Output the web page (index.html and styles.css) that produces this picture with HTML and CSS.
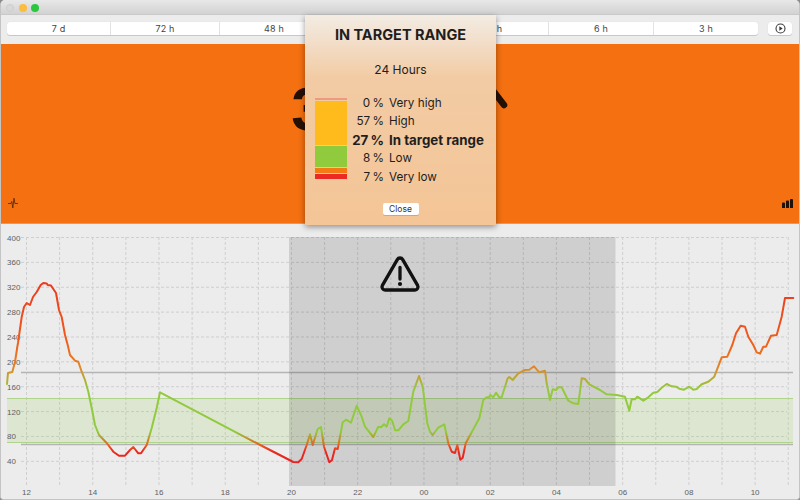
FILE: index.html
```html
<!DOCTYPE html>
<html lang="en">
<head>
<meta charset="utf-8">
<title>In target range</title>
<link rel="stylesheet" href="styles.css">
</head>
<body>
<div class="window">
  <header class="titlebar">
    <span class="light light-off"></span>
    <span class="light light-min"></span>
    <span class="light light-max"></span>
  </header>
  <nav class="toolbar">
    <div class="segments">
      <span class="segment">7 d</span>
      <span class="segment">72 h</span>
      <span class="segment">48 h</span>
      <span class="segment">24 h</span>
      <span class="segment">12 h</span>
      <span class="segment">6 h</span>
      <span class="segment">3 h</span>
    </div>
    <button class="play" type="button" aria-label="Play">
      <svg width="11" height="11" viewBox="0 0 11 11"><circle cx="5.5" cy="5.5" r="4.500" fill="none" stroke="#3a3a3a" stroke-width="1.100"/><path d="M4.300 3.300 7.700 5.500 4.300 7.700Z" fill="#3a3a3a"/></svg>
    </button>
  </nav>
  <section class="hero">
    <div class="reading">
      <span>302</span>
      <svg class="reading-arrow" width="100" height="44" viewBox="0 0 100 44"><path d="M82 1 95 18" fill="none" stroke="#251006" stroke-width="6.500" stroke-linecap="round"/></svg>
    </div>
    <div class="hero-icons">
      <svg width="10" height="12" viewBox="0 0 10 12"><path d="M0 6.500H3L3.800 4.500 4.800 11 6 1.200 6.900 6.500H10" fill="none" stroke="#4a2a10" stroke-width=".8"/></svg>
      <svg width="11" height="9" viewBox="0 0 11 9"><path d="M0 4.500Q0 3.500 1 3.500H2Q3 3.500 3 4.500V9H0ZM4 2.500Q4 1.500 5 1.500H6Q7 1.500 7 2.500V9H4ZM8 1Q8 0 9 0H10Q11 0 11 1V9H8Z" fill="#1e1208"/></svg>
    </div>
  </section>
  <main class="chart-area">
    <svg class="chart" viewBox="0 0 798 276" width="798" height="276">
      <defs>
        <linearGradient id="glucose" gradientUnits="userSpaceOnUse" x1="0" y1="60" x2="0" y2="240">
          <stop offset="0" stop-color="#ea3a20"/>
          <stop offset=".3" stop-color="#ef5a1c"/>
          <stop offset=".46" stop-color="#e3852a"/>
          <stop offset=".58" stop-color="#94c93d"/>
          <stop offset=".82" stop-color="#8fcb3c"/>
          <stop offset=".89" stop-color="#e8661f"/>
          <stop offset=".93" stop-color="#e82a22"/>
          <stop offset="1" stop-color="#e82020"/>
        </linearGradient>
      </defs>
      <g class="grid" id="grid"></g>
      <rect class="band" x="6" y="174" width="786" height="44.500"/>
      <path class="band-line" d="M6 174.500H792M6 218.500H792"/>
      <path class="limit" d="M20 148.500H792M20 220.500H792"/>
      <rect class="night" x="288" y="13" width="326.500" height="249"/>
      <g class="labels" id="labels"></g>
      <path class="curve" stroke="url(#glucose)" d="M6 160 7 149 11.300 148 14 138 16.300 123 17 119 20.700 93 23 83 25.700 79 29 81 32 73 35.700 68 39.700 61 42.300 59 45.700 59.500 46.700 61 50 61.500 55 69 58 86 60.700 93 64 111 66.700 121 69 131 74 136.700 77.300 137.700 80.700 147.700 84 156 87.300 167.700 90.700 184 94 201 98 211 105.700 219 112.300 227.700 118 231.700 124 231.700 129 226 132.300 223 137.300 229.300 140 229.300 145.700 221 150.700 204 155.700 184 159 168.300 257.300 220 269 226 292.300 238 297.300 238.300 300.700 235 305.700 221 309 210.300 311.700 221 316.700 205 320 203 323 222.700 328.300 238.300 331 236 334 224.300 336.700 225 341.700 198.300 345 195.700 350 198.700 355.700 181.700 360.700 192.700 364 202.700 372.300 213 377.300 202.700 380 203.300 383 200.300 385.700 202.700 388.300 194.300 391.300 197 394 206.300 397.300 206.300 402.300 200.300 407.300 197 412.300 167.700 418 152 421.700 162.700 426.300 199.300 429 207.700 431.700 211 437.300 203.700 443.300 200.300 447.300 219.300 450.700 227.700 454 229 456.300 221 459.300 235.700 461.700 233.700 464.700 219.300 478.300 194.300 482.300 176 485.700 173.300 488 173.300 489.300 171 492.300 173.300 495 168.700 498.300 173.300 500.700 173.300 504 162.700 506.700 154.300 508.300 153 511.700 156 517.300 149.300 524 146 528.300 145.700 533 142.300 538.300 148.300 544 146.700 545.700 159.300 549 176 551.700 165.300 555 166 557.300 163.300 560.700 163.300 567.300 176.700 572.300 179.300 577.300 180 580.700 154.300 584 155 588.300 160.300 599 166 605.700 170.300 615.700 171 624 172.700 628.300 186.700 630.700 175 634 175.300 636.300 172.700 642.300 176.700 647.300 173.300 652.300 168.700 656.300 168 660.700 163.700 665.700 160 670.700 162.300 675 162.700 678.300 164.700 683 165.700 688.300 162.700 692.300 165.700 695.700 165 700.700 160.300 707.300 157.700 713.300 152.700 720.700 133.300 726.300 132.700 731.300 121 735 109.300 739.700 101.700 744 102.700 747.300 112.700 752.300 121 755.700 128.300 759 129.700 762.300 122.700 765 122.700 770 111.700 775.700 111 780.700 92.700 784 74 792.300 74"/>
    </svg>
    <div class="warning">
      <svg width="42" height="38" viewBox="0 0 42 38"><path d="M18.300 4.600a3.100 3.100 0 0 1 5.400 0L38.600 30.400a3.100 3.100 0 0 1-2.700 4.600H6.100a3.100 3.100 0 0 1-2.700-4.600Z" fill="none" stroke="#111" stroke-width="3.300"/><path d="M21 12.500V24" stroke="#111" stroke-width="3.300" stroke-linecap="round"/><circle cx="21" cy="29" r="2.100" fill="#111"/></svg>
    </div>
  </main>
  <aside class="popup">
    <h1 class="popup-title">IN TARGET RANGE</h1>
    <p class="popup-period">24 Hours</p>
    <div class="popup-body">
      <div class="stack">
        <span class="stack-part stack-veryhigh"></span>
        <span class="stack-part stack-high"></span>
        <span class="stack-part stack-target"></span>
        <span class="stack-part stack-low"></span>
        <span class="stack-part stack-verylow"></span>
      </div>
      <div class="legend">
        <span class="pct">0 %</span><span>Very high</span>
        <span class="pct">57 %</span><span>High</span>
        <span class="pct strong">27 %</span><span class="strong">In target range</span>
        <span class="pct">8 %</span><span>Low</span>
        <span class="pct">7 %</span><span>Very low</span>
      </div>
    </div>
    <button class="close" type="button">Close</button>
  </aside>
</div>
<script src="chart.js"></script>
</body>
</html>
```
FILE: chart.js
```js
var NS = "http://www.w3.org/2000/svg";
var grid = document.getElementById("grid");
var labels = document.getElementById("labels");
function add(parent, tag, attrs, text) {
  var el = document.createElementNS(NS, tag);
  for (var k in attrs) el.setAttribute(k, attrs[k]);
  if (text) el.textContent = text;
  parent.appendChild(el);
}
var values = [400, 360, 320, 280, 240, 200, 160, 120, 80, 40];
values.forEach(function (v, i) {
  var y = 13.5 + i * 24.87;
  add(grid, "line", { x1: 20, x2: 786, y1: y, y2: y });
  add(labels, "text", { x: 6, y: y + 3, "class": "tick" }, String(v));
});
var hours = ["12", "14", "16", "18", "20", "22", "00", "02", "04", "06", "08", "10"];
for (var h = 0; h <= 23; h++) {
  var x = 25.5 + h * 33.12;
  add(grid, "line", { x1: x, x2: x, y1: 13, y2: 263 });
  if (h % 2 === 0) {
    add(labels, "text", { x: x, y: 271, "class": "tick tick-x" }, hours[h / 2]);
  }
}
```
FILE: styles.css
```css
* { box-sizing: border-box; }
html, body { margin: 0; padding: 0; width: 800px; height: 500px; overflow: hidden; background: #8a8a8a; }
body { font-family: Inter, "Liberation Sans", sans-serif; }
.window { position: relative; width: 800px; height: 500px; display: flex; flex-direction: column; background: #ececec; border-radius: 5px 5px 4px 4px; overflow: hidden; border: 1px solid #c4c4c4; border-top: 0; }
.titlebar { height: 15px; flex: none; display: flex; align-items: center; gap: 4.5px; padding: 1px 0 0 5px; background: linear-gradient(#e8e8e8, #d2d2d2); border-bottom: 1px solid #c9c9c9; }
.light { width: 8px; height: 8px; border-radius: 50%; }
.light-off { background: #d8d8d8; border: 1px solid #cdcdcd; }
.light-min { background: #fcbc40; }
.light-max { background: #2ac73f; }
.toolbar { height: 29px; flex: none; display: flex; align-items: flex-start; padding: 7px 7px 0 6px; gap: 10px; background: #ececec; }
.segments { width: 751px; flex: none; height: 13px; display: grid; grid-template-columns: 103px 109px 109px 110px 110px 105px 105px; background: #fff; border-radius: 3px; box-shadow: 0 1px 0 #c8c8c8, 0 0 1px #d0d0d0; }
.segment { font-size: 9px; line-height: 13px; text-align: center; color: #444; border-left: 1px solid #e2e2e2; letter-spacing: .2px; }
.segment:first-child { border-left: 0; }
.play { width: 24px; height: 13px; padding: 0; display: flex; align-items: center; justify-content: center; background: #fff; border: 0; border-radius: 3px; box-shadow: 0 1px 0 #c8c8c8, 0 0 1px #d0d0d0; }
.hero { height: 180px; flex: none; display: flex; flex-direction: column; align-items: center; background: #f47010; border-bottom: 1px solid #f0935a; }
.reading { height: 130px; margin-bottom: 23px; flex: none; width: 100%; display: flex; align-items: center; justify-content: center; gap: 14px; font-size: 62px; font-weight: 700; color: #251006; font-family: "Liberation Sans", sans-serif; line-height: 1; }
.reading-arrow { flex: none; display: block; }
.hero-icons { width: 100%; display: flex; align-items: center; justify-content: space-between; padding: 0 6px 0 7px; }
.chart-area { position: relative; flex: 1; min-height: 0; background: #ececec; }
.chart { display: block; }
.grid line { stroke: #cfcfcf; stroke-width: 1; stroke-dasharray: 3 2; }
.band { fill: #8fcb3c; fill-opacity: .15; }
.band-line { fill: none; stroke: #b0d48c; stroke-width: 1.2; }
.limit { fill: none; stroke: #b4b4b4; stroke-width: 1.5; }
.night { fill: #000; fill-opacity: .12; }
.tick { font-family: "Liberation Sans", sans-serif; font-size: 8px; fill: #606060; }
.tick-x { text-anchor: middle; }
.curve { fill: none; stroke-width: 2; stroke-linejoin: round; stroke-linecap: round; }
.warning { position: absolute; left: 378px; top: 31px; line-height: 0; }
.popup { position: absolute; left: 304px; top: 15px; width: 191px; height: 210px; display: flex; flex-direction: column; align-items: center; background: linear-gradient(#f3ece4 0, #f2cba4 30%, #f4c596 100%); box-shadow: 0 2px 6px rgba(0,0,0,.4); color: #1e1e1e; }
.popup-title { margin: 11px 0 0; font-size: 14.5px; line-height: 18px; font-weight: 700; }
.popup-period { margin: 18px 0 0; font-size: 12px; line-height: 16px; }
.popup-body { align-self: flex-start; display: flex; margin: 15px 0 0 10px; }
.stack { width: 32px; height: 82px; margin-top: 5px; display: flex; flex-direction: column; gap: 1px; }
.stack-part { display: block; }
.stack-veryhigh { height: 2px; background: #ee9a82; }
.stack-high { height: 44px; background: #ffbb1c; }
.stack-target { height: 21px; background: #8fcb3c; }
.stack-low { height: 5px; background: #f47a14; }
.stack-verylow { height: 5px; background: #ec2a24; }
.legend { display: grid; grid-template-columns: 37px auto; column-gap: 5px; font-size: 11.7px; line-height: 18.4px; padding-top: 1px; }
.pct { text-align: right; white-space: nowrap; word-spacing: -1px; }
.strong { font-weight: 700; font-size: 13.3px; white-space: nowrap; }
.close { margin-top: 17px; width: 36px; height: 12px; padding: 0; background: #fff; border: 0; border-radius: 2px; font-family: inherit; font-size: 8.5px; line-height: 12px; color: #333; box-shadow: 0 1px 0 #c9a888; }
```
